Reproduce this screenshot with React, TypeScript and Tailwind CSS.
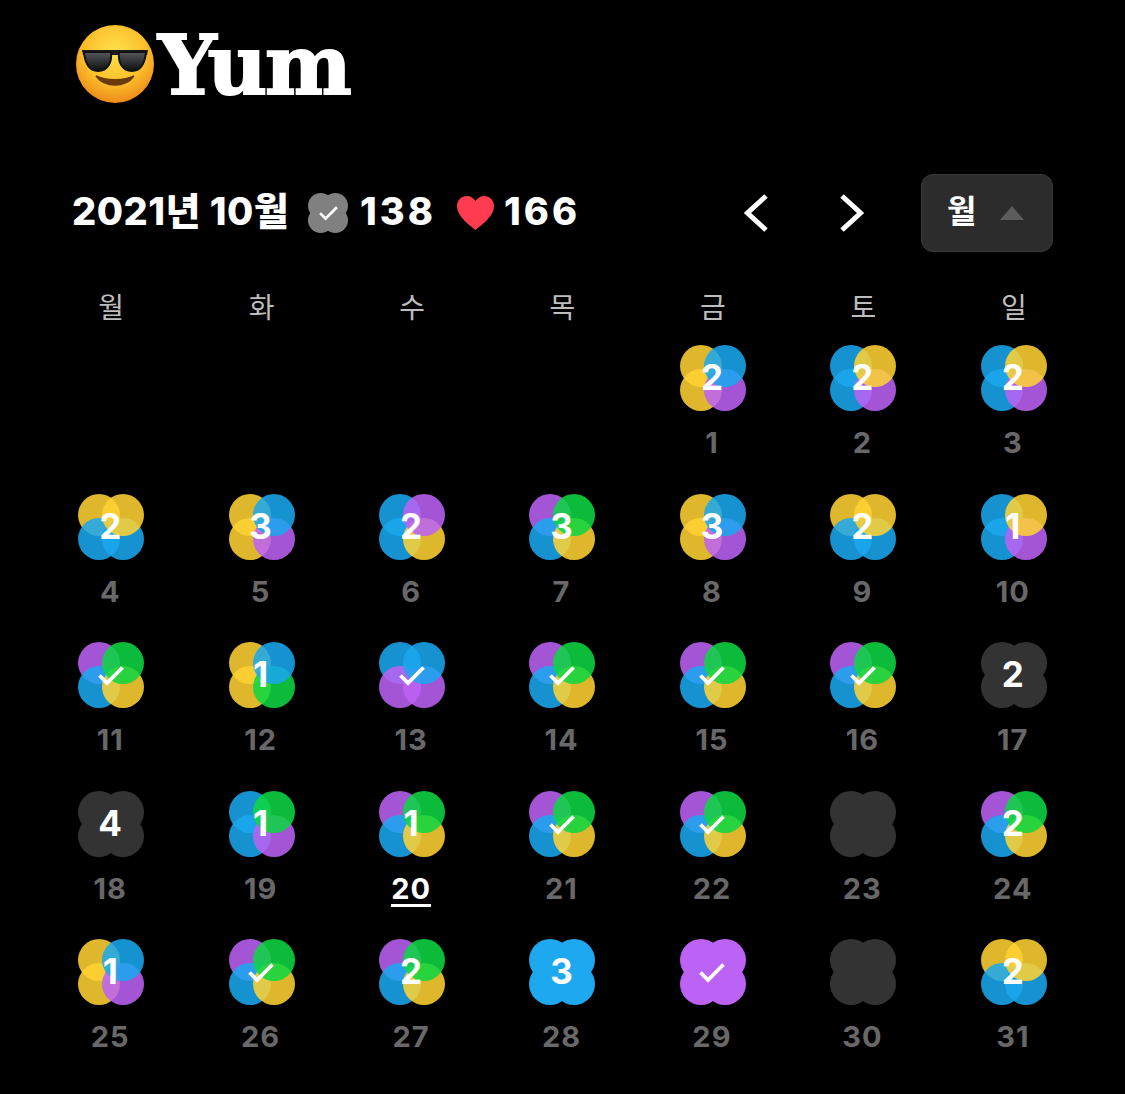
const FONT = "font-['Inter','Noto_Sans_CJK_KR',sans-serif]";

const Y = "#ffd234";
const B = "#1aa8ef";
const P = "#bc62f5";
const G = "#0dd742";

type Day = {
  date: number;
  petals?: string[];
  solid?: string;
  label?: string;
};

const YBYP = [Y, B, Y, P];
const BYBP = [B, Y, B, P];
const YYBB = [Y, Y, B, B];
const PGBY = [P, G, B, Y];

const days: Day[] = [
  { date: 1, petals: YBYP, label: "2" },
  { date: 2, petals: BYBP, label: "2" },
  { date: 3, petals: BYBP, label: "2" },
  { date: 4, petals: YYBB, label: "2" },
  { date: 5, petals: YBYP, label: "3" },
  { date: 6, petals: [B, P, B, Y], label: "2" },
  { date: 7, petals: PGBY, label: "3" },
  { date: 8, petals: YBYP, label: "3" },
  { date: 9, petals: YYBB, label: "2" },
  { date: 10, petals: BYBP, label: "1" },
  { date: 11, petals: PGBY, label: "check" },
  { date: 12, petals: [Y, B, Y, G], label: "1" },
  { date: 13, petals: [B, B, P, P], label: "check" },
  { date: 14, petals: PGBY, label: "check" },
  { date: 15, petals: PGBY, label: "check" },
  { date: 16, petals: PGBY, label: "check" },
  { date: 17, solid: "#333333", label: "2" },
  { date: 18, solid: "#333333", label: "4" },
  { date: 19, petals: [B, G, B, P], label: "1" },
  { date: 20, petals: PGBY, label: "1" },
  { date: 21, petals: PGBY, label: "check" },
  { date: 22, petals: PGBY, label: "check" },
  { date: 23, solid: "#333333" },
  { date: 24, petals: PGBY, label: "2" },
  { date: 25, petals: YBYP, label: "1" },
  { date: 26, petals: PGBY, label: "check" },
  { date: 27, petals: PGBY, label: "2" },
  { date: 28, solid: "#1da8f0", label: "3" },
  { date: 29, solid: P, label: "check" },
  { date: 30, solid: "#333333" },
  { date: 31, petals: YYBB, label: "2" },
];

const weekdays = ["월", "화", "수", "목", "금", "토", "일"];

function Flower({ petals, solid }: { petals?: string[]; solid?: string }) {
  const colors = petals ?? [solid!, solid!, solid!, solid!];
  const opacity = petals ? 0.87 : 1;
  // drawn top-left, bottom-left, bottom-right, top-right so the overlaps stack correctly
  return (
    <svg viewBox="0 0 66 66" className="block h-full w-full">
      <circle cx="21" cy="21" r="21" fill={colors[0]} fillOpacity={opacity} />
      <circle cx="21" cy="45" r="21" fill={colors[2]} fillOpacity={opacity} />
      <circle cx="45" cy="45" r="21" fill={colors[3]} fillOpacity={opacity} />
      <circle cx="45" cy="21" r="21" fill={colors[1]} fillOpacity={opacity} />
    </svg>
  );
}

function Check({ className }: { className: string }) {
  return (
    <svg viewBox="0 0 26 20" fill="none" className={className}>
      <path d="M1.5 9.5 L9 17 L24.5 1.5" stroke="white" strokeWidth="3.8" />
    </svg>
  );
}

function DayCell({ day }: { day: Day }) {
  const isToday = day.date === 20;
  return (
    <div className="flex flex-col items-center">
      <div className="grid h-[66px] w-[66px] place-items-center">
        <div className="[grid-area:1/1] h-[66px] w-[66px]">
          <Flower petals={day.petals} solid={day.solid} />
        </div>
        {day.label === "check" ? (
          <Check className="[grid-area:1/1] z-10 mt-[2px] mr-[1px] h-[20px] w-[26px]" />
        ) : (
          <span className="[grid-area:1/1] z-10 mr-[2px] mb-[1px] text-[35px] leading-none font-bold text-white">
            {day.label}
          </span>
        )}
      </div>
      <span
        className={
          "mt-[14px] mr-[2px] h-[36px] text-[29px] leading-[36px] font-bold tracking-[1px] " +
          (isToday
            ? "border-b-[3px] border-white text-white"
            : "text-[#686868]")
        }
      >
        {day.date}
      </span>
    </div>
  );
}

function SunglassesEmoji() {
  return (
    <svg viewBox="0 0 78 78" className="h-[78px] w-[78px] shrink-0">
      <defs>
        <radialGradient id="face" cx="50%" cy="35%" r="65%">
          <stop offset="0%" stopColor="#ffe14d" />
          <stop offset="60%" stopColor="#fbc02c" />
          <stop offset="100%" stopColor="#ee8a1a" />
        </radialGradient>
        <linearGradient id="lens" x1="0" y1="0" x2="0" y2="1">
          <stop offset="0%" stopColor="#55585c" />
          <stop offset="100%" stopColor="#0d0d0e" />
        </linearGradient>
      </defs>
      <circle cx="39" cy="39" r="39" fill="url(#face)" />
      <path d="M6 25 L72 25 L71 30 L7 30 Z" fill="#1b1b1b" />
      <path d="M8 27 H35 C36 37 32 46 22 46 C13 46 9 37 8 27 Z" fill="url(#lens)" stroke="#111" strokeWidth="2" />
      <path d="M43 27 H70 C69 37 65 46 56 46 C46 46 42 37 43 27 Z" fill="url(#lens)" stroke="#111" strokeWidth="2" />
      <path d="M20 51 C29 63 49 63 58 51 C49 56 29 56 20 51 Z" fill="#6b3a0c" stroke="#6b3a0c" strokeWidth="1.5" />
    </svg>
  );
}

export default function App() {
  return (
    <div className={`h-[1094px] w-[1125px] overflow-hidden bg-black pt-[25px] ${FONT}`}>
      {/* Logo */}
      <div className="flex h-[78px] items-center pl-[76px]">
        <SunglassesEmoji />
        <h1 className="mt-[2px] ml-[4px] font-['DejaVu_Serif',serif] text-[82px] leading-none font-bold tracking-[-2px] text-white [-webkit-text-stroke:2px_white]">
          Yum
        </h1>
      </div>

      {/* Month stats and navigation */}
      <div className="mt-[71px] flex h-[78px] items-center pr-[72px] pl-[72px]">
        <h2 className="mb-[4px] w-[215px] text-[38px] font-extrabold tracking-[0.5px] whitespace-nowrap text-white">
          2021년 10월
        </h2>
        <div className="ml-[21px] h-[40px] w-[40px]">
          <div className="grid h-full w-full place-items-center">
            <div className="[grid-area:1/1] h-[40px] w-[40px]">
              <Flower solid="#808080" />
            </div>
            <Check className="[grid-area:1/1] z-10 h-[15px] w-[19px]" />
          </div>
        </div>
        <span className="mb-[4px] ml-[12px] w-[76px] text-[38px] font-extrabold tracking-[3px] text-white">138</span>
        <svg viewBox="0 0 37 34" className="ml-[21px] h-[34px] w-[37px]">
          <path
            d="M18.5 34 C14 30 0 21 0 10 C0 4 4.5 0 10 0 C13.5 0 16.5 2 18.5 5 C20.5 2 23.5 0 27 0 C32.5 0 37 4 37 10 C37 21 23 30 18.5 34 Z"
            fill="#ff3b50"
          />
        </svg>
        <span className="mb-[4px] ml-[10px] text-[38px] font-extrabold tracking-[3px] text-white">166</span>

        <div className="ml-auto flex items-center">
          <svg viewBox="0 0 24 38" fill="none" className="h-[38px] w-[24px]">
            <path d="M22 2 L3.5 19 L22 36" stroke="white" strokeWidth="5" />
          </svg>
          <svg viewBox="0 0 24 38" fill="none" className="ml-[72px] h-[38px] w-[24px]">
            <path d="M2 2 L20.5 19 L2 36" stroke="white" strokeWidth="5" />
          </svg>
          <button className="ml-[57px] flex h-[78px] w-[132px] items-center rounded-[12px] border border-[#3a3a3a] bg-[#2c2c2c] pl-[25px]">
            <span className="mb-[2px] text-[32px] font-bold text-white">월</span>
            <svg viewBox="0 0 24 14" className="ml-[24px] h-[14px] w-[24px]">
              <path d="M12 0 L24 14 H0 Z" fill="#5c5c5c" />
            </svg>
          </button>
        </div>
      </div>

      {/* Calendar */}
      <div className="mt-[38px] grid grid-cols-7 px-[36px]">
        {weekdays.map((name) => (
          <div key={name} className="mb-[19px] h-[36px] text-center text-[28px] leading-[36px] font-normal text-[#bdbdbd]">
            {name}
          </div>
        ))}
      </div>
      <div className="grid grid-cols-7 gap-y-[32.5px] px-[36px]">
        {[0, 1, 2, 3].map((n) => (
          <div key={n} />
        ))}
        {days.map((day) => (
          <DayCell key={day.date} day={day} />
        ))}
      </div>
    </div>
  );
}
